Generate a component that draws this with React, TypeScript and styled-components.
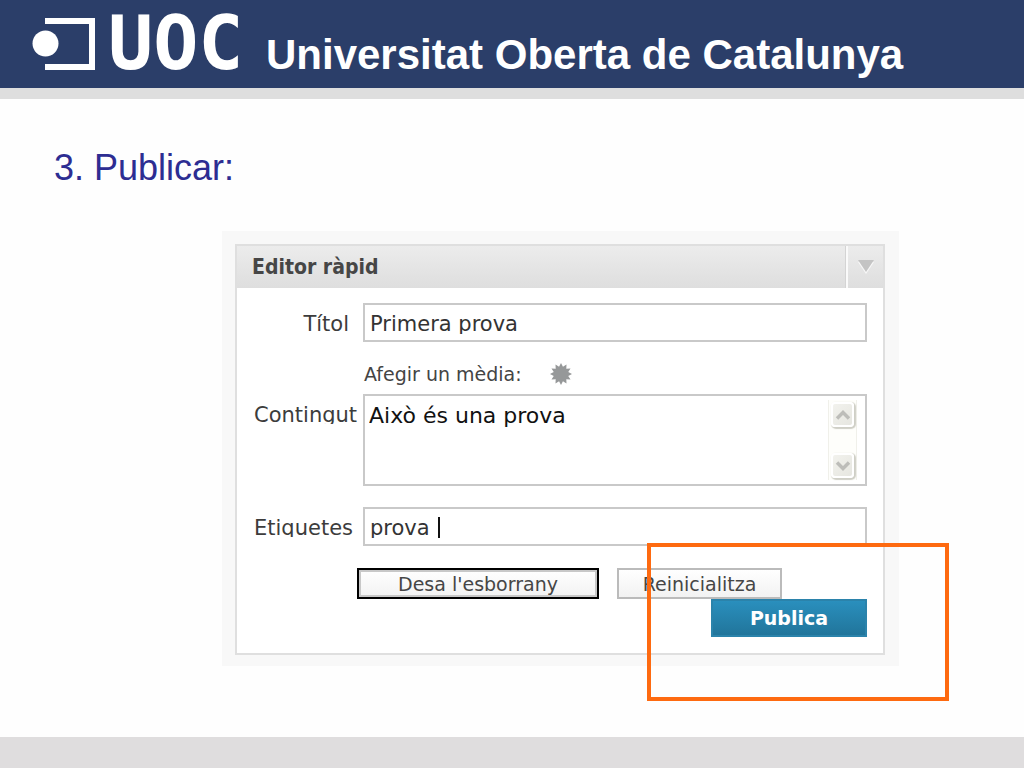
import React from "react";
import styled, { createGlobalStyle } from "styled-components";

const GlobalStyle = createGlobalStyle`
  *, *::before, *::after { box-sizing: border-box; }
  body { margin: 0; background: #fff; }
`;

const sans = `"Liberation Sans", Arial, sans-serif`;
const ui = `"DejaVu Sans", Verdana, sans-serif`;

const Page = styled.div`
  min-height: 100vh;
  display: flex;
  flex-direction: column;
  background: #fefefe;
`;

const Banner = styled.header`
  height: 99px;
  display: flex;
  align-items: flex-start;
  padding: 0 32px;
  background: #2b3e69;
  border-bottom: 11px solid #dedede;
  color: #fff;
  font-family: ${sans};
  font-weight: 700;
`;

const Symbol = styled.svg`
  flex: none;
  width: 64px;
  height: 54px;
  margin-top: 17px;
`;

const Wordmark = styled.span`
  flex: none;
  width: 158px;
  margin-left: 12px;
  font-family: "DejaVu Sans Mono", monospace;
  font-size: 75px;
  line-height: 86px;
  white-space: nowrap;
`;

const University = styled.span`
  padding-top: 31px;
  font-size: 42px;
  line-height: 48px;
  white-space: nowrap;
`;

const Main = styled.main`
  flex: 1;
  padding: 48px 125px 70px 54px;
`;

const Heading = styled.h1`
  margin: 0 0 42px;
  font: 400 36px/42px ${sans};
  color: #2d2d92;
`;

const Stage = styled.section`
  position: relative;
  margin-left: 168px;
  padding: 13px 14px 11px 13px;
  background: #f8f8f8;
  font-family: ${ui};
  color: #3c3c3c;
`;

const Highlight = styled.div`
  position: absolute;
  top: 312px;
  right: -50px;
  width: 302px;
  height: 158px;
  border: 4px solid #fe6a10;
  pointer-events: none;
`;

const Widget = styled.div`
  border: 2px solid #dfdfdf;
  background: #fff;
`;

const WidgetBar = styled.div`
  display: flex;
  height: 42px;
  background: linear-gradient(#ececec, #dedede);
`;

const WidgetTitle = styled.h2`
  flex: 1;
  margin: 0;
  padding-left: 15px;
  font: 700 21px/42px "DejaVu Sans Condensed", "DejaVu Sans", sans-serif;
  color: #464646;
`;

const Toggle = styled.button`
  width: 37px;
  padding: 2px 0 0;
  border: 0;
  border-left: 2px solid #fafafa;
  box-shadow: -1px 0 #d4d4d4;
  background: none;
`;

const Form = styled.form`
  padding: 15px 16px 16px;
`;

const Row = styled.div<{ $gap?: number }>`
  display: grid;
  grid-template-columns: 110px minmax(0, 1fr);
  margin-bottom: ${(p) => p.$gap ?? 0}px;
`;

const Label = styled.label<{ $end?: boolean }>`
  height: ${(p) => (p.$end ? 24 : 21)}px;
  margin-top: 9px;
  padding-right: ${(p) => (p.$end ? 14 : 0)}px;
  padding-left: 1px;
  overflow: ${(p) => (p.$end ? "visible" : "hidden")};
  text-align: ${(p) => (p.$end ? "right" : "left")};
  font-size: 21px;
  line-height: 24px;
  white-space: nowrap;
`;

const Field = styled.div`
  position: relative;
  height: 39px;
  padding: 7px 5px;
  border: 2px solid #c9c9c9;
  background: #fff;
`;

const FieldClip = styled.div`
  height: 22px;
  overflow: hidden;
`;

const Input = styled.input`
  display: block;
  width: 100%;
  height: 24px;
  padding: 0;
  border: 0;
  outline: 0;
  background: none;
  font: 21px/24px ${ui};
  color: #333;
`;

const Caret = styled.span`
  position: absolute;
  left: 73px;
  top: 8px;
  width: 2px;
  height: 21px;
  background: #111;
`;

const Media = styled.div`
  display: flex;
  align-items: center;
  gap: 28px;
  height: 30px;
  margin: 17px 0 5px 111px;
  font-size: 19px;
  color: #444;
`;

const IconButton = styled.button`
  display: flex;
  padding: 0;
  border: 0;
  background: none;
`;

const Editor = styled.div`
  display: flex;
  height: 92px;
  padding: 4px 8px 4px 4px;
  border: 2px solid #c9c9c9;
  background: #fff;
`;

const TextArea = styled.textarea`
  flex: 1;
  min-width: 0;
  padding: 3px 0 0;
  border: 0;
  outline: 0;
  resize: none;
  overflow: hidden;
  background: none;
  font: 22px/26px ${ui};
  color: #111;
`;

const Scroll = styled.div`
  display: flex;
  flex-direction: column;
  justify-content: space-between;
  width: 29px;
  padding: 2px;
  border: 1px solid #f0f0ea;
  border-width: 0 1px;
  background: #fefefb;
`;

const ScrollButton = styled.button`
  display: flex;
  align-items: center;
  justify-content: center;
  height: 25px;
  padding: 0;
  border: 2px solid #fff;
  border-radius: 4px;
  background: linear-gradient(135deg, #f2f2ed, #e6e6e0);
  box-shadow: 1px 1px 1px 1px #cfcfc6;
`;

const Actions = styled.div`
  display: flex;
  gap: 18px;
  margin-left: 104px;
`;

const Button = styled.button<{ $focus?: boolean }>`
  width: ${(p) => (p.$focus ? 242 : 165)}px;
  height: 31px;
  padding: 0;
  border: 2px solid ${(p) => (p.$focus ? "#000" : "#bbb")};
  box-shadow: ${(p) => (p.$focus ? "inset 0 0 0 2px #c8c8c8" : "none")};
  background: linear-gradient(#fff, #f2f2f2);
  font: 19px/24px ${ui};
  color: #464646;
`;

const Publish = styled.button`
  display: block;
  width: 156px;
  height: 38px;
  margin-left: auto;
  padding: 0;
  border: 2px solid #2b83ab;
  background: linear-gradient(#2a8fbd, #21759b);
  font: 700 19px/24px ${ui};
  color: #fff;
`;

const Footer = styled.footer`
  height: 31px;
  background: #dfddde;
`;

const burst = Array.from({ length: 24 }, (_, i) => {
  const r = i % 2 ? 7.5 : 11;
  const a = (i * Math.PI) / 12;
  return `${11 + r * Math.sin(a)},${11 - r * Math.cos(a)}`;
}).join(" ");

export default function App() {
  return (
    <Page>
      <GlobalStyle />
      <Banner>
        <Symbol viewBox="0 0 64 54" aria-hidden="true">
          <path d="M13 4H60V50H13" fill="none" stroke="#fff" strokeWidth="6" />
          <circle cx="13.5" cy="26.5" r="13" fill="#fff" />
        </Symbol>
        <Wordmark>UOC</Wordmark>
        <University>Universitat Oberta de Catalunya</University>
      </Banner>
      <Main>
        <Heading>3. Publicar:</Heading>
        <Stage>
          <Widget>
            <WidgetBar>
              <WidgetTitle>Editor ràpid</WidgetTitle>
              <Toggle type="button" aria-label="Editor ràpid">
                <svg width="16" height="14" viewBox="0 0 16 14">
                  <path d="M0 2H16L8 14Z" fill="#f8f8f8" />
                  <path d="M0 0H16L8 12Z" fill="#c4c4c4" />
                </svg>
              </Toggle>
            </WidgetBar>
            <Form onSubmit={(e) => e.preventDefault()}>
              <Row>
                <Label htmlFor="title" $end>Títol</Label>
                <Field>
                  <FieldClip>
                    <Input id="title" defaultValue="Primera prova" />
                  </FieldClip>
                </Field>
              </Row>
              <Media>
                <span>Afegir un mèdia:</span>
                <IconButton type="button" aria-label="Afegir un mèdia">
                  <svg width="22" height="22" viewBox="0 0 22 22">
                    <polygon points={burst} fill="#969899" />
                  </svg>
                </IconButton>
              </Media>
              <Row $gap={21}>
                <Label htmlFor="content">Contingut</Label>
                <Editor>
                  <TextArea id="content" defaultValue="Això és una prova" />
                  <Scroll>
                    <ScrollButton type="button" aria-label="Amunt">
                      <svg width="16" height="10" viewBox="0 0 16 10">
                        <path d="M2 8.500L8 2.500L14 8.500" fill="none" stroke="#bdbdb9" strokeWidth="3.500" />
                      </svg>
                    </ScrollButton>
                    <ScrollButton type="button" aria-label="Avall">
                      <svg width="16" height="10" viewBox="0 0 16 10">
                        <path d="M2 1.500L8 7.500L14 1.500" fill="none" stroke="#bdbdb9" strokeWidth="3.500" />
                      </svg>
                    </ScrollButton>
                  </Scroll>
                </Editor>
              </Row>
              <Row $gap={22}>
                <Label htmlFor="tags">Etiquetes</Label>
                <Field>
                  <FieldClip>
                    <Input id="tags" defaultValue="prova" />
                  </FieldClip>
                  <Caret />
                </Field>
              </Row>
              <Actions>
                <Button type="button" $focus>Desa l'esborrany</Button>
                <Button type="reset">Reinicialitza</Button>
              </Actions>
              <Publish type="submit">Publica</Publish>
            </Form>
          </Widget>
          <Highlight />
        </Stage>
      </Main>
      <Footer />
    </Page>
  );
}
